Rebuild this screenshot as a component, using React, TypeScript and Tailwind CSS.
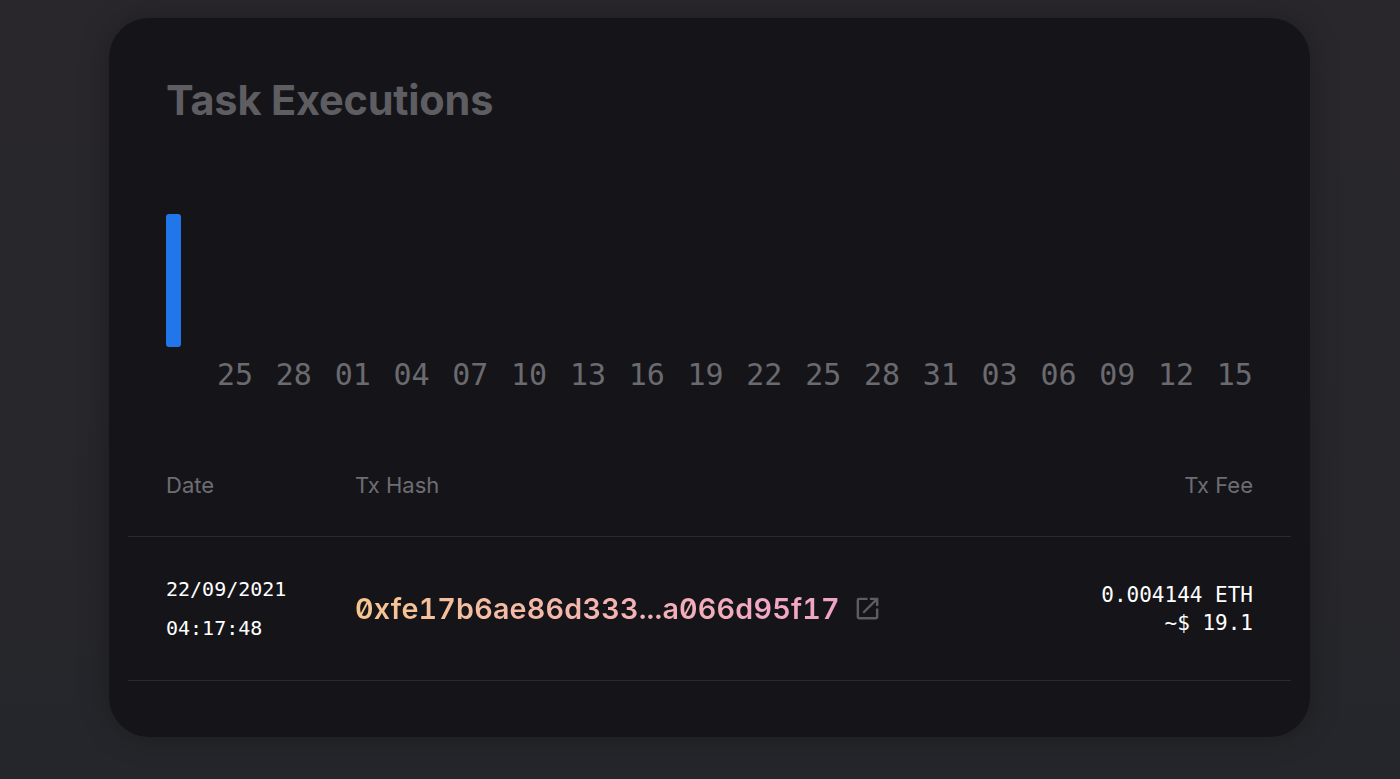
import { MdOpenInNew } from "react-icons/md";

const ticks = ["25", "28", "01", "04", "07", "10", "13", "16", "19", "22", "25", "28", "31", "03", "06", "09", "12", "15"];

const executions = [
  {
    date: "22/09/2021",
    time: "04:17:48",
    hash: "0xfe17b6ae86d333...a066d95f17",
    fee: "0.004144 ETH",
    usd: "~$ 19.1",
  },
];

export default function App() {
  return (
    <div className="min-h-screen w-full bg-gradient-to-b from-[#29272c] to-[#25262b] pt-[18px] pl-[109px] font-['Inter',sans-serif]">
      <div className="w-[1201px] h-[719px] rounded-[40px] bg-[#151519] px-[19px] shadow-[0_0_30px_rgba(0,0,0,0.25)]">
        {/* title */}
        <div className="px-[38px] pt-[57px]">
          <h1 className="text-[41.5px] leading-[50px] font-bold text-[#5e5e62] tracking-[-0.2px]">Task Executions</h1>
        </div>

        {/* chart */}
        <div className="px-[38px] mt-[89px]">
          <div className="h-[133px] flex items-end">
            <div className="w-[15px] h-[133px] rounded-[3px] bg-[#2176ea]" />
          </div>
          <div className="mt-[10px] pl-[51px] flex justify-between font-['DejaVu_Sans_Mono',monospace] text-[30px] leading-[36px] text-[#6a6a6f]">
            {ticks.map((t, i) => (
              <span key={i}>{t}</span>
            ))}
          </div>
        </div>

        {/* table */}
        <div className="mt-[79px]">
          <div className="grid grid-cols-[189px_1fr_auto] px-[38px] pb-[38px] text-[22px] leading-[26px] text-[#6d6d73]">
            <div>Date</div>
            <div>Tx Hash</div>
            <div className="text-right">Tx Fee</div>
          </div>
          {executions.map((e, i) => (
            <div key={i} className="border-t border-b border-[#2a2b2f] grid grid-cols-[189px_1fr_auto] items-center px-[38px] h-[145px]">
              <div className="font-['DejaVu_Sans_Mono',monospace] text-[20px] leading-[39px] text-white">
                <div>{e.date}</div>
                <div>{e.time}</div>
              </div>
              <div className="flex items-center gap-[13px]">
                <span className="font-semibold text-[28.7px] tracking-[0.2px] [font-feature-settings:'zero','tnum'] bg-gradient-to-r from-[#f7c590] to-[#f0a3c9] bg-clip-text text-transparent">
                  {e.hash}
                </span>
                <MdOpenInNew className="text-[#5c5c61]" size={29} />
              </div>
              <div className="text-right font-['DejaVu_Sans_Mono',monospace] text-[21px] leading-[28px] text-white">
                <div>{e.fee}</div>
                <div>{e.usd}</div>
              </div>
            </div>
          ))}
        </div>
      </div>
    </div>
  );
}
